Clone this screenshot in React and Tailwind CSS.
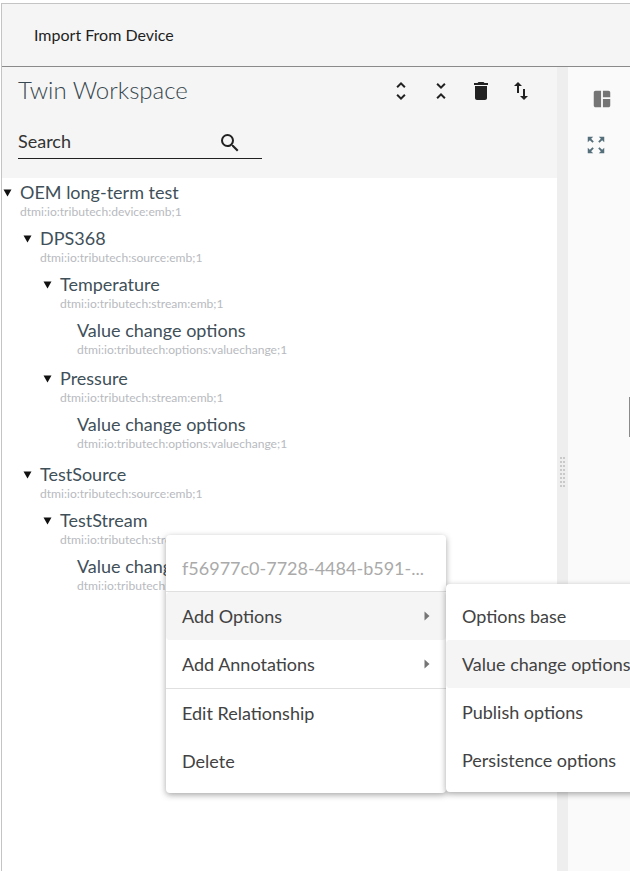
import React from "react";
import { MdUnfoldMore, MdUnfoldLess, MdDelete, MdSwapVert, MdSearch, MdSpaceDashboard, MdZoomOutMap } from "react-icons/md";

const tree = [
  { label: "OEM long-term test", sub: "dtmi:io:tributech:device:emb;1", children: [
    { label: "DPS368", sub: "dtmi:io:tributech:source:emb;1", children: [
      { label: "Temperature", sub: "dtmi:io:tributech:stream:emb;1", children: [
        { label: "Value change options", sub: "dtmi:io:tributech:options:valuechange;1" },
      ]},
      { label: "Pressure", sub: "dtmi:io:tributech:stream:emb;1", children: [
        { label: "Value change options", sub: "dtmi:io:tributech:options:valuechange;1" },
      ]},
    ]},
    { label: "TestSource", sub: "dtmi:io:tributech:source:emb;1", children: [
      { label: "TestStream", sub: "dtmi:io:tributech:stream:emb;1", children: [
        { label: "Value change options", sub: "dtmi:io:tributech:options:valuechange;1" },
      ]},
    ]},
  ]},
];

function Node({ node, root }) {
  const kids = node.children;
  return (
    <div className={`${root ? "" : "pl-5"} ${kids && !root ? "pb-[2px]" : ""}`}>
      <div className={`relative h-[46px] ${kids ? "pl-[18px]" : "pl-[15px]"}`}>
        {kids && (
          <svg className="absolute left-[1px] top-[8px]" width="9" height="8" viewBox="0 0 9 8">
            <path d="M0.5 0.5H8.5L4.5 7.5Z" fill="#111" />
          </svg>
        )}
        <div className="text-[18px] leading-[23px] text-[#3f5059]">{node.label}</div>
        <div className="mt-[2px] text-[12.1px] leading-[12px] text-[#b8bac0]">{node.sub}</div>
      </div>
      {kids && kids.map((k, i) => <Node key={i} node={k} />)}
    </div>
  );
}

function Item({ children, active, arrow }) {
  return (
    <div className={`h-12 shrink-0 flex items-center justify-between px-4 text-[18px] text-[#424242] ${active ? "bg-[#f5f5f5] rounded-[4px]" : ""}`}>
      <span className="whitespace-nowrap">{children}</span>
      {arrow && (
        <svg width="6" height="10" viewBox="0 0 6 10">
          <path d="M0.5 0.5L5.5 5L0.5 9.5Z" fill="#757575" />
        </svg>
      )}
    </div>
  );
}

export default function App() {
  return (
    <div className="relative w-[630px] h-[871px] overflow-hidden bg-white font-['Lato',sans-serif] pt-[3px] pl-px">
      <div className="h-full border-t border-l border-[#c4c4c4] flex flex-col">
        <div className="h-[63px] shrink-0 bg-[#f5f5f5] border-b border-[#8a8a8a] flex items-center pl-[32px] text-[16px] text-[#1f1f1f]">
          Import From Device
        </div>
        <div className="flex-1 flex min-h-0">
          <div className="w-[555px] shrink-0 flex flex-col">
            <div className="h-[111px] shrink-0 bg-[#f5f5f5] pl-[16px] pr-[24px]">
              <div className="flex items-center justify-between h-[48px]">
                <span className="text-[24px] leading-[30px] -mt-[2px] font-light text-[#37474f]">Twin Workspace</span>
                <div className="flex items-center gap-[16px] text-[#212121]">
                  <MdUnfoldMore size={24} />
                  <MdUnfoldLess size={24} />
                  <MdDelete size={24} />
                  <MdSwapVert size={24} />
                </div>
              </div>
              <div className="mt-[10px] w-[244px] h-[34px] border-b border-[#212121] flex items-center justify-between pr-[20px]">
                <span className="text-[18px] text-[#333]">Search</span>
                <MdSearch size={24} className="text-[#212121] mt-[3px]" />
              </div>
            </div>
            <div className="flex-1 pt-[3px]">
              {tree.map((n, i) => <Node key={i} node={n} root />)}
            </div>
          </div>
          <div className="w-[11px] shrink-0 bg-[#eeeeee] flex justify-center">
            <div className="mt-[390px] w-[6px] h-[30px] grid grid-cols-2 gap-x-[1px] gap-y-[2px] content-start">
              {Array.from({ length: 16 }).map((_, i) => (
                <span key={i} className="w-[2px] h-[2px] bg-[#c9c9c9]" />
              ))}
            </div>
          </div>
          <div className="flex-1 bg-[#fafafa] relative flex flex-col items-start pt-[21px] gap-[24px]">
            <MdSpaceDashboard size={22} className="text-[#757575] ml-[23px]" />
            <MdZoomOutMap size={22} className="text-[#546e7a] ml-[17px]" />
            <div className="absolute right-0 top-[330px] w-px h-[40px] bg-[#8a8a8a]" />
          </div>
        </div>
      </div>

      <div className="absolute left-[166px] top-[535px] w-[280px] h-[258px] bg-white rounded-[4px] shadow-[0_2px_6px_rgba(0,0,0,0.35)] flex flex-col z-10">
        <div className="h-[57px] shrink-0 flex items-center pt-[10px] px-4 text-[18px] leading-none text-[#aaaaaa] border-b border-[#e0e0e0] whitespace-nowrap">
          f56977c0-7728-4484-b591-...
        </div>
        <Item active arrow>Add Options</Item>
        <Item arrow>Add Annotations</Item>
        <div className="h-px shrink-0 bg-[#e0e0e0]" />
        <Item>Edit Relationship</Item>
        <Item>Delete</Item>
      </div>

      <div className="absolute left-[446px] top-[584px] w-[200px] h-[208px] bg-white rounded-[4px] shadow-[0_2px_6px_rgba(0,0,0,0.35)] flex flex-col py-2 z-20">
        <Item>Options base</Item>
        <Item active>Value change options</Item>
        <Item>Publish options</Item>
        <Item>Persistence options</Item>
      </div>
    </div>
  );
}
